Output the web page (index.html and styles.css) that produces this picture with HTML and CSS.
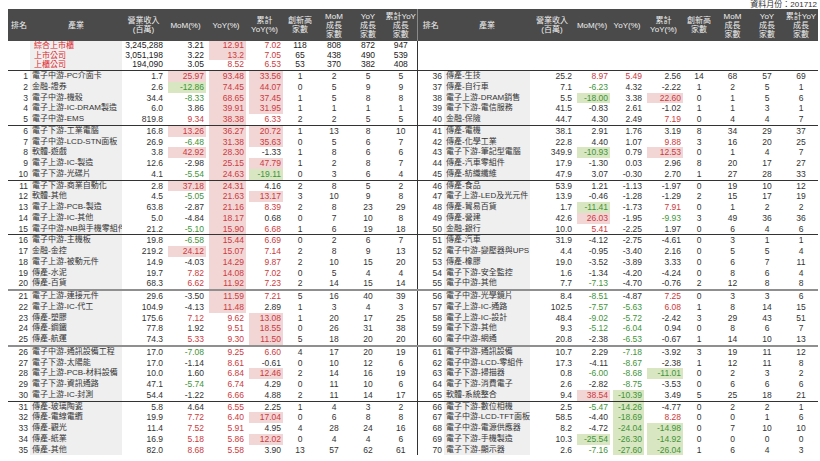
FILE: index.html
```html
<!DOCTYPE html>
<html lang="zh-Hant">
<head>
<meta charset="utf-8">
<title>產業營收排名</title>
<link rel="stylesheet" href="styles.css">
</head>
<body>
<div class="page">
  <div class="meta">資料月份：201712</div>
  <table class="sheet">
    <colgroup>
      <col class="w22"><col class="w92"><col class="w43"><col class="w41"><col class="w40"><col class="w37"><col class="w34"><col class="w34"><col class="w34"><col class="w32">
      <col class="w27"><col class="w86"><col class="w44"><col class="w36"><col class="w34"><col class="w39"><col class="w32"><col class="w35"><col class="w34"><col class="w34">
    </colgroup>
    <thead>
      <tr>
        <th>排名</th><th>產業</th><th>營業收入<br>(百萬)</th><th>MoM(%)</th><th>YoY(%)</th><th>累計<br>YoY(%)</th><th>創新高<br>家數</th><th>MoM<br>成長<br>家數</th><th>YoY<br>成長<br>家數</th><th>累計YoY<br>成長<br>家數</th>
        <th class="sep">排名</th><th>產業</th><th>營業收入<br>(百萬)</th><th>MoM(%)</th><th>YoY(%)</th><th>累計<br>YoY(%)</th><th>創新高<br>家數</th><th>MoM<br>成長<br>家數</th><th>YoY<br>成長<br>家數</th><th>累計YoY<br>成長<br>家數</th>
      </tr>
    </thead>
    <tbody class="summary">
      <tr><td class="r"></td><td class="n sname">綜合上市櫃</td><td class="v">3,245,288</td><td class="p">3.21</td><td class="p up2">12.91</td><td class="p up">7.02</td><td class="c">118</td><td class="c">808</td><td class="c">872</td><td class="c">947</td><td class="r sep"></td><td colspan="9"></td></tr>
      <tr><td class="r"></td><td class="n sname">上市公司</td><td class="v">3,051,198</td><td class="p">3.22</td><td class="p up2">13.2</td><td class="p up">7.05</td><td class="c">65</td><td class="c">438</td><td class="c">490</td><td class="c">539</td><td class="r sep"></td><td colspan="9"></td></tr>
      <tr><td class="r"></td><td class="n sname">上櫃公司</td><td class="v">194,090</td><td class="p">3.05</td><td class="p up">8.52</td><td class="p up">6.53</td><td class="c">53</td><td class="c">370</td><td class="c">382</td><td class="c">408</td><td class="r sep"></td><td colspan="9"></td></tr>
    </tbody>
    <tbody class="main">
      <tr class="gd"><td class="r">1</td><td class="n">電子中游-PC介面卡</td><td class="v">1.7</td><td class="p up2">25.97</td><td class="p up2">93.48</td><td class="p up2">33.56</td><td class="c">1</td><td class="c">2</td><td class="c">5</td><td class="c">5</td><td class="r sep">36</td><td class="n">傳產-生技</td><td class="v">25.2</td><td class="p up">8.97</td><td class="p up">5.49</td><td class="p">2.56</td><td class="c">14</td><td class="c">68</td><td class="c">57</td><td class="c">69</td></tr>
      <tr><td class="r">2</td><td class="n">金融-證券</td><td class="v">2.6</td><td class="p dn2">-12.86</td><td class="p up2">74.45</td><td class="p up2">44.07</td><td class="c">0</td><td class="c">5</td><td class="c">9</td><td class="c">9</td><td class="r sep">37</td><td class="n">傳產-自行車</td><td class="v">7.1</td><td class="p dn">-6.23</td><td class="p">4.32</td><td class="p">-2.22</td><td class="c">1</td><td class="c">2</td><td class="c">5</td><td class="c">1</td></tr>
      <tr><td class="r">3</td><td class="n">電子中游-機殼</td><td class="v">34.4</td><td class="p dn">-8.33</td><td class="p up2">68.65</td><td class="p up2">37.45</td><td class="c">1</td><td class="c">5</td><td class="c">8</td><td class="c">8</td><td class="r sep">38</td><td class="n">電子上游-DRAM銷售</td><td class="v">5.5</td><td class="p dn2">-18.00</td><td class="p">3.38</td><td class="p up2">22.60</td><td class="c">0</td><td class="c">1</td><td class="c">5</td><td class="c">6</td></tr>
      <tr><td class="r">4</td><td class="n">電子上游-IC-DRAM製造</td><td class="v">6.0</td><td class="p">3.86</td><td class="p up2">39.91</td><td class="p up2">31.95</td><td class="c">1</td><td class="c">1</td><td class="c">1</td><td class="c">1</td><td class="r sep">39</td><td class="n">電子下游-電信服務</td><td class="v">41.5</td><td class="p">-0.83</td><td class="p">2.61</td><td class="p">-1.02</td><td class="c">1</td><td class="c">1</td><td class="c">3</td><td class="c">1</td></tr>
      <tr><td class="r">5</td><td class="n">電子中游-EMS</td><td class="v">819.8</td><td class="p up">9.34</td><td class="p up2">38.38</td><td class="p up">6.33</td><td class="c">2</td><td class="c">2</td><td class="c">5</td><td class="c">5</td><td class="r sep">40</td><td class="n">金融-保險</td><td class="v">44.7</td><td class="p">4.30</td><td class="p">2.49</td><td class="p up">7.19</td><td class="c">0</td><td class="c">4</td><td class="c">4</td><td class="c">7</td></tr>

      <tr class="gd"><td class="r">6</td><td class="n">電子下游-工業電腦</td><td class="v">16.8</td><td class="p up2">13.26</td><td class="p up2">36.27</td><td class="p up2">20.72</td><td class="c">1</td><td class="c">13</td><td class="c">8</td><td class="c">10</td><td class="r sep">41</td><td class="n">傳產-電機</td><td class="v">38.1</td><td class="p">2.91</td><td class="p">1.76</td><td class="p">3.19</td><td class="c">8</td><td class="c">34</td><td class="c">29</td><td class="c">37</td></tr>
      <tr><td class="r">7</td><td class="n">電子中游-LCD-STN面板</td><td class="v">26.9</td><td class="p dn">-6.48</td><td class="p up2">31.38</td><td class="p up2">35.63</td><td class="c">0</td><td class="c">5</td><td class="c">6</td><td class="c">7</td><td class="r sep">42</td><td class="n">傳產-化學工業</td><td class="v">22.8</td><td class="p">4.40</td><td class="p">1.07</td><td class="p up">9.88</td><td class="c">3</td><td class="c">16</td><td class="c">20</td><td class="c">25</td></tr>
      <tr><td class="r">8</td><td class="n">軟體-遊戲</td><td class="v">3.8</td><td class="p up2">42.92</td><td class="p up2">28.30</td><td class="p">-1.33</td><td class="c">1</td><td class="c">8</td><td class="c">6</td><td class="c">6</td><td class="r sep">43</td><td class="n">電子下游-筆記型電腦</td><td class="v">349.9</td><td class="p dn2">-10.93</td><td class="p">0.79</td><td class="p up2">12.53</td><td class="c">0</td><td class="c">1</td><td class="c">4</td><td class="c">7</td></tr>
      <tr><td class="r">9</td><td class="n">電子上游-IC-製造</td><td class="v">12.6</td><td class="p">-2.98</td><td class="p up2">25.15</td><td class="p up2">47.79</td><td class="c">1</td><td class="c">2</td><td class="c">8</td><td class="c">7</td><td class="r sep">44</td><td class="n">傳產-汽車零組件</td><td class="v">17.9</td><td class="p">-1.30</td><td class="p">0.03</td><td class="p">2.96</td><td class="c">8</td><td class="c">20</td><td class="c">17</td><td class="c">27</td></tr>
      <tr><td class="r">10</td><td class="n">電子下游-光碟片</td><td class="v">4.1</td><td class="p dn">-5.54</td><td class="p up2">24.63</td><td class="p dn2">-19.11</td><td class="c">0</td><td class="c">3</td><td class="c">6</td><td class="c">4</td><td class="r sep">45</td><td class="n">傳產-紡織纖維</td><td class="v">47.9</td><td class="p">3.07</td><td class="p">-0.30</td><td class="p">2.70</td><td class="c">1</td><td class="c">27</td><td class="c">28</td><td class="c">33</td></tr>

      <tr class="gd"><td class="r">11</td><td class="n">電子下游-商業自動化</td><td class="v">2.8</td><td class="p up2">37.18</td><td class="p up2">24.31</td><td class="p">4.16</td><td class="c">2</td><td class="c">8</td><td class="c">5</td><td class="c">2</td><td class="r sep">46</td><td class="n">傳產-食品</td><td class="v">53.9</td><td class="p">1.21</td><td class="p">-1.13</td><td class="p">-1.97</td><td class="c">0</td><td class="c">19</td><td class="c">10</td><td class="c">12</td></tr>
      <tr><td class="r">12</td><td class="n">軟體-其他</td><td class="v">4.5</td><td class="p dn">-5.05</td><td class="p up2">21.63</td><td class="p up2">13.17</td><td class="c">3</td><td class="c">10</td><td class="c">9</td><td class="c">8</td><td class="r sep">47</td><td class="n">電子上游-LED及光元件</td><td class="v">13.9</td><td class="p">-0.46</td><td class="p">-1.28</td><td class="p">-1.29</td><td class="c">2</td><td class="c">15</td><td class="c">17</td><td class="c">19</td></tr>
      <tr><td class="r">13</td><td class="n">電子上游-PCB-製造</td><td class="v">63.8</td><td class="p">-2.87</td><td class="p up2">21.16</td><td class="p up">8.39</td><td class="c">2</td><td class="c">8</td><td class="c">23</td><td class="c">29</td><td class="r sep">48</td><td class="n">傳產-貿易百貨</td><td class="v">1.7</td><td class="p dn2">-11.41</td><td class="p">-1.73</td><td class="p up">7.91</td><td class="c">0</td><td class="c">1</td><td class="c">2</td><td class="c">2</td></tr>
      <tr><td class="r">14</td><td class="n">電子上游-IC-其他</td><td class="v">5.0</td><td class="p">-4.84</td><td class="p up2">18.17</td><td class="p">0.68</td><td class="c">0</td><td class="c">7</td><td class="c">10</td><td class="c">8</td><td class="r sep">49</td><td class="n">傳產-營建</td><td class="v">42.6</td><td class="p up2">26.03</td><td class="p">-1.95</td><td class="p dn">-9.93</td><td class="c">3</td><td class="c">49</td><td class="c">36</td><td class="c">36</td></tr>
      <tr><td class="r">15</td><td class="n">電子中游-NB與手機零組件</td><td class="v">21.2</td><td class="p dn">-5.10</td><td class="p up2">15.90</td><td class="p up">6.68</td><td class="c">1</td><td class="c">6</td><td class="c">19</td><td class="c">18</td><td class="r sep">50</td><td class="n">金融-銀行</td><td class="v">10.0</td><td class="p up">5.41</td><td class="p">-2.25</td><td class="p">1.97</td><td class="c">0</td><td class="c">6</td><td class="c">4</td><td class="c">6</td></tr>

      <tr class="gd"><td class="r">16</td><td class="n">電子中游-主機板</td><td class="v">19.8</td><td class="p dn">-6.58</td><td class="p up2">15.44</td><td class="p up">6.69</td><td class="c">0</td><td class="c">2</td><td class="c">6</td><td class="c">7</td><td class="r sep">51</td><td class="n">傳產-汽車</td><td class="v">31.9</td><td class="p">-4.12</td><td class="p">-2.75</td><td class="p">-4.61</td><td class="c">0</td><td class="c">3</td><td class="c">1</td><td class="c">1</td></tr>
      <tr><td class="r">17</td><td class="n">金融-金控</td><td class="v">219.2</td><td class="p up2">24.12</td><td class="p up2">15.07</td><td class="p up">7.14</td><td class="c">2</td><td class="c">8</td><td class="c">9</td><td class="c">13</td><td class="r sep">52</td><td class="n">電子中游-變壓器與UPS</td><td class="v">4.4</td><td class="p">-0.95</td><td class="p">-3.40</td><td class="p">2.16</td><td class="c">0</td><td class="c">5</td><td class="c">5</td><td class="c">4</td></tr>
      <tr><td class="r">18</td><td class="n">電子上游-被動元件</td><td class="v">14.9</td><td class="p">-4.03</td><td class="p up2">14.29</td><td class="p up">9.87</td><td class="c">2</td><td class="c">10</td><td class="c">15</td><td class="c">20</td><td class="r sep">53</td><td class="n">傳產-橡膠</td><td class="v">19.0</td><td class="p">-3.52</td><td class="p">-3.89</td><td class="p">3.33</td><td class="c">0</td><td class="c">6</td><td class="c">7</td><td class="c">11</td></tr>
      <tr><td class="r">19</td><td class="n">傳產-水泥</td><td class="v">19.7</td><td class="p up">7.82</td><td class="p up2">14.08</td><td class="p up">7.02</td><td class="c">0</td><td class="c">5</td><td class="c">4</td><td class="c">4</td><td class="r sep">54</td><td class="n">電子下游-安全監控</td><td class="v">1.6</td><td class="p">-1.34</td><td class="p">-4.20</td><td class="p">-4.24</td><td class="c">0</td><td class="c">8</td><td class="c">6</td><td class="c">4</td></tr>
      <tr><td class="r">20</td><td class="n">傳產-百貨</td><td class="v">68.3</td><td class="p up">6.62</td><td class="p up2">11.92</td><td class="p up">7.23</td><td class="c">2</td><td class="c">14</td><td class="c">15</td><td class="c">14</td><td class="r sep">55</td><td class="n">電子中游-其他</td><td class="v">7.7</td><td class="p dn">-7.13</td><td class="p">-4.70</td><td class="p">-0.76</td><td class="c">2</td><td class="c">12</td><td class="c">8</td><td class="c">8</td></tr>

      <tr class="gg"><td class="r">21</td><td class="n">電子上游-連接元件</td><td class="v">29.6</td><td class="p">-3.50</td><td class="p up2">11.59</td><td class="p up">7.21</td><td class="c">5</td><td class="c">16</td><td class="c">40</td><td class="c">39</td><td class="r sep">56</td><td class="n">電子中游-光學鏡片</td><td class="v">8.4</td><td class="p dn">-8.51</td><td class="p">-4.87</td><td class="p up">7.25</td><td class="c">0</td><td class="c">3</td><td class="c">3</td><td class="c">6</td></tr>
      <tr><td class="r">22</td><td class="n">電子上游-IC-代工</td><td class="v">104.9</td><td class="p">-4.13</td><td class="p up2">11.48</td><td class="p">2.89</td><td class="c">1</td><td class="c">3</td><td class="c">4</td><td class="c">3</td><td class="r sep">57</td><td class="n">電子上游-IC-通路</td><td class="v">102.5</td><td class="p dn">-7.57</td><td class="p dn">-5.63</td><td class="p up">6.08</td><td class="c">1</td><td class="c">8</td><td class="c">14</td><td class="c">15</td></tr>
      <tr><td class="r">23</td><td class="n">傳產-塑膠</td><td class="v">175.6</td><td class="p up">7.12</td><td class="p up">9.62</td><td class="p up2">13.08</td><td class="c">1</td><td class="c">20</td><td class="c">17</td><td class="c">25</td><td class="r sep">58</td><td class="n">電子上游-IC-設計</td><td class="v">48.4</td><td class="p dn">-9.02</td><td class="p dn">-5.72</td><td class="p">-2.42</td><td class="c">3</td><td class="c">29</td><td class="c">43</td><td class="c">51</td></tr>
      <tr><td class="r">24</td><td class="n">傳產-鋼鐵</td><td class="v">77.8</td><td class="p">1.92</td><td class="p up">9.51</td><td class="p up2">18.55</td><td class="c">0</td><td class="c">26</td><td class="c">31</td><td class="c">38</td><td class="r sep">59</td><td class="n">電子下游-其他</td><td class="v">9.3</td><td class="p dn">-5.12</td><td class="p dn">-6.04</td><td class="p">0.94</td><td class="c">0</td><td class="c">8</td><td class="c">6</td><td class="c">7</td></tr>
      <tr><td class="r">25</td><td class="n">傳產-航運</td><td class="v">74.3</td><td class="p up">5.33</td><td class="p up">9.30</td><td class="p up2">11.50</td><td class="c">5</td><td class="c">18</td><td class="c">20</td><td class="c">20</td><td class="r sep">60</td><td class="n">電子中游-網通</td><td class="v">20.8</td><td class="p">-2.38</td><td class="p dn">-6.53</td><td class="p">-0.67</td><td class="c">1</td><td class="c">14</td><td class="c">10</td><td class="c">13</td></tr>

      <tr class="gg"><td class="r">26</td><td class="n">電子中游-通訊設備工程</td><td class="v">17.0</td><td class="p dn">-7.08</td><td class="p up">9.25</td><td class="p up">6.60</td><td class="c">4</td><td class="c">17</td><td class="c">20</td><td class="c">19</td><td class="r sep">61</td><td class="n">電子中游-通訊設備</td><td class="v">10.7</td><td class="p">2.29</td><td class="p dn">-7.18</td><td class="p">-3.92</td><td class="c">3</td><td class="c">19</td><td class="c">11</td><td class="c">12</td></tr>
      <tr><td class="r">27</td><td class="n">電子下游-太陽能</td><td class="v">17.0</td><td class="p">-1.14</td><td class="p up">8.61</td><td class="p">-0.61</td><td class="c">0</td><td class="c">10</td><td class="c">12</td><td class="c">6</td><td class="r sep">62</td><td class="n">電子中游-LCD-零組件</td><td class="v">17.3</td><td class="p">-4.11</td><td class="p dn">-8.67</td><td class="p">-2.38</td><td class="c">1</td><td class="c">12</td><td class="c">11</td><td class="c">8</td></tr>
      <tr><td class="r">28</td><td class="n">電子上游-PCB-材料設備</td><td class="v">10.0</td><td class="p">1.60</td><td class="p up">6.84</td><td class="p up2">12.46</td><td class="c">2</td><td class="c">14</td><td class="c">16</td><td class="c">19</td><td class="r sep">63</td><td class="n">電子下游-掃描器</td><td class="v">0.8</td><td class="p dn">-6.00</td><td class="p dn">-8.68</td><td class="p dn2">-11.01</td><td class="c">0</td><td class="c">2</td><td class="c">3</td><td class="c">2</td></tr>
      <tr><td class="r">29</td><td class="n">電子下游-資訊通路</td><td class="v">47.1</td><td class="p dn">-5.74</td><td class="p up">6.74</td><td class="p">4.29</td><td class="c">0</td><td class="c">11</td><td class="c">10</td><td class="c">6</td><td class="r sep">64</td><td class="n">電子下游-消費電子</td><td class="v">2.6</td><td class="p">-2.82</td><td class="p dn">-8.75</td><td class="p">-3.53</td><td class="c">0</td><td class="c">6</td><td class="c">6</td><td class="c">6</td></tr>
      <tr><td class="r">30</td><td class="n">電子上游-IC-封測</td><td class="v">54.4</td><td class="p">-1.22</td><td class="p up">6.66</td><td class="p">4.88</td><td class="c">2</td><td class="c">11</td><td class="c">14</td><td class="c">17</td><td class="r sep">65</td><td class="n">軟體-系統整合</td><td class="v">9.4</td><td class="p up2">38.54</td><td class="p dn2">-10.39</td><td class="p">3.49</td><td class="c">5</td><td class="c">25</td><td class="c">18</td><td class="c">21</td></tr>

      <tr class="gd"><td class="r">31</td><td class="n">傳產-玻璃陶瓷</td><td class="v">5.8</td><td class="p">4.64</td><td class="p up">6.55</td><td class="p">2.25</td><td class="c">1</td><td class="c">4</td><td class="c">3</td><td class="c">2</td><td class="r sep">66</td><td class="n">電子下游-數位相機</td><td class="v">2.5</td><td class="p dn">-5.47</td><td class="p dn2">-14.26</td><td class="p">-4.77</td><td class="c">0</td><td class="c">2</td><td class="c">2</td><td class="c">1</td></tr>
      <tr><td class="r">32</td><td class="n">傳產-電線電纜</td><td class="v">19.9</td><td class="p up">7.72</td><td class="p up">6.40</td><td class="p up2">17.04</td><td class="c">0</td><td class="c">6</td><td class="c">8</td><td class="c">8</td><td class="r sep">67</td><td class="n">電子中游-LCD-TFT面板</td><td class="v">58.5</td><td class="p">-4.40</td><td class="p dn2">-18.69</td><td class="p up">8.28</td><td class="c">0</td><td class="c">0</td><td class="c">1</td><td class="c">6</td></tr>
      <tr><td class="r">33</td><td class="n">傳產-觀光</td><td class="v">11.4</td><td class="p up">7.52</td><td class="p up">5.91</td><td class="p">4.95</td><td class="c">4</td><td class="c">28</td><td class="c">24</td><td class="c">16</td><td class="r sep">68</td><td class="n">電子中游-電源供應器</td><td class="v">8.2</td><td class="p">-4.72</td><td class="p dn2">-24.04</td><td class="p dn2">-14.98</td><td class="c">0</td><td class="c">7</td><td class="c">10</td><td class="c">10</td></tr>
      <tr><td class="r">34</td><td class="n">傳產-紙業</td><td class="v">16.9</td><td class="p up">5.18</td><td class="p up">5.86</td><td class="p up2">12.02</td><td class="c">0</td><td class="c">4</td><td class="c">4</td><td class="c">6</td><td class="r sep">69</td><td class="n">電子下游-手機製造</td><td class="v">10.3</td><td class="p dn2">-25.54</td><td class="p dn2">-26.30</td><td class="p dn2">-14.92</td><td class="c">0</td><td class="c">0</td><td class="c">0</td><td class="c">0</td></tr>
      <tr><td class="r">35</td><td class="n">傳產-其他</td><td class="v">82.0</td><td class="p up">8.68</td><td class="p up">5.58</td><td class="p">3.90</td><td class="c">13</td><td class="c">57</td><td class="c">62</td><td class="c">61</td><td class="r sep">70</td><td class="n">電子下游-顯示器</td><td class="v">2.6</td><td class="p dn">-7.16</td><td class="p dn2">-27.60</td><td class="p dn2">-26.04</td><td class="c">1</td><td class="c">6</td><td class="c">4</td><td class="c">3</td></tr>
    </tbody>
  </table>
</div>
</body>
</html>
```

FILE: styles.css
```css
* { box-sizing: border-box; }
html, body { margin: 0; padding: 0; background: #fff; }
body {
  font-family: "Liberation Sans", "Noto Sans CJK TC", sans-serif;
  color: #333;
}
.page { width: 820px; padding: 0 2px 0 8px; }
.meta {
  height: 9px;
  line-height: 9px;
  font-size: 8px;
  text-align: right;
  color: #333;
  padding-right: 1px;
}
.sheet {
  width: 810px;
  border-collapse: collapse;
  table-layout: fixed;
}
.w22 { width: 22px; } .w92 { width: 92px; } .w43 { width: 43px; } .w41 { width: 41px; }
.w40 { width: 40px; } .w37 { width: 37px; } .w34 { width: 34px; } .w32 { width: 32px; }
.w27 { width: 27px; } .w86 { width: 86px; } .w44 { width: 44px; } .w36 { width: 36px; }
.w39 { width: 39px; } .w35 { width: 35px; }

.sheet th {
  height: 32px;
  padding: 0;
  background: #4a4a4a;
  color: #f0f0f0;
  font-family: "Liberation Sans", "Noto Sans CJK TC", sans-serif;
  font-weight: normal;
  font-size: 8px;
  line-height: 9px;
  text-align: center;
  vertical-align: middle;
  white-space: nowrap;
}
.sheet th.sep { border-left: 1px solid #8a8a8a; }

.sheet td {
  height: 10.75px;
  line-height: 10.75px;
  padding: 0 2px;
  font-size: 8.5px;
  white-space: nowrap;
  overflow: hidden;
  color: #333;
}
.summary td {
  height: 9.7px;
  line-height: 9.7px;
  color: #222;
}
.sheet td.r { text-align: right; padding: 0 2px 0 0; }
.sheet td.sep { border-left: 1px solid #333; }
.sheet td.n {
  background: #efefef;
  font-size: 8px;
  padding: 0 0 0 2px;
  text-overflow: clip;
}
.sheet td.sname { color: #e0262b; padding-left: 4px; }
.sheet td.v { text-align: right; }
.sheet td.p { text-align: right; }
.sheet td.c { text-align: center; }

.sheet td.up { color: #cc3a3d; }
.sheet td.up2 { color: #cc3a3d; background: #f2d5d5; box-shadow: inset 3px 0 0 #fff; }
.sheet td.dn { color: #3f9438; }
.sheet td.dn2 { color: #3f9438; background: #d8e6c1; box-shadow: inset 3px 0 0 #fff; }

.gd td { border-top: 1px solid #333; }
.gg td { border-top: 2px solid #8f8f8f; }
```
